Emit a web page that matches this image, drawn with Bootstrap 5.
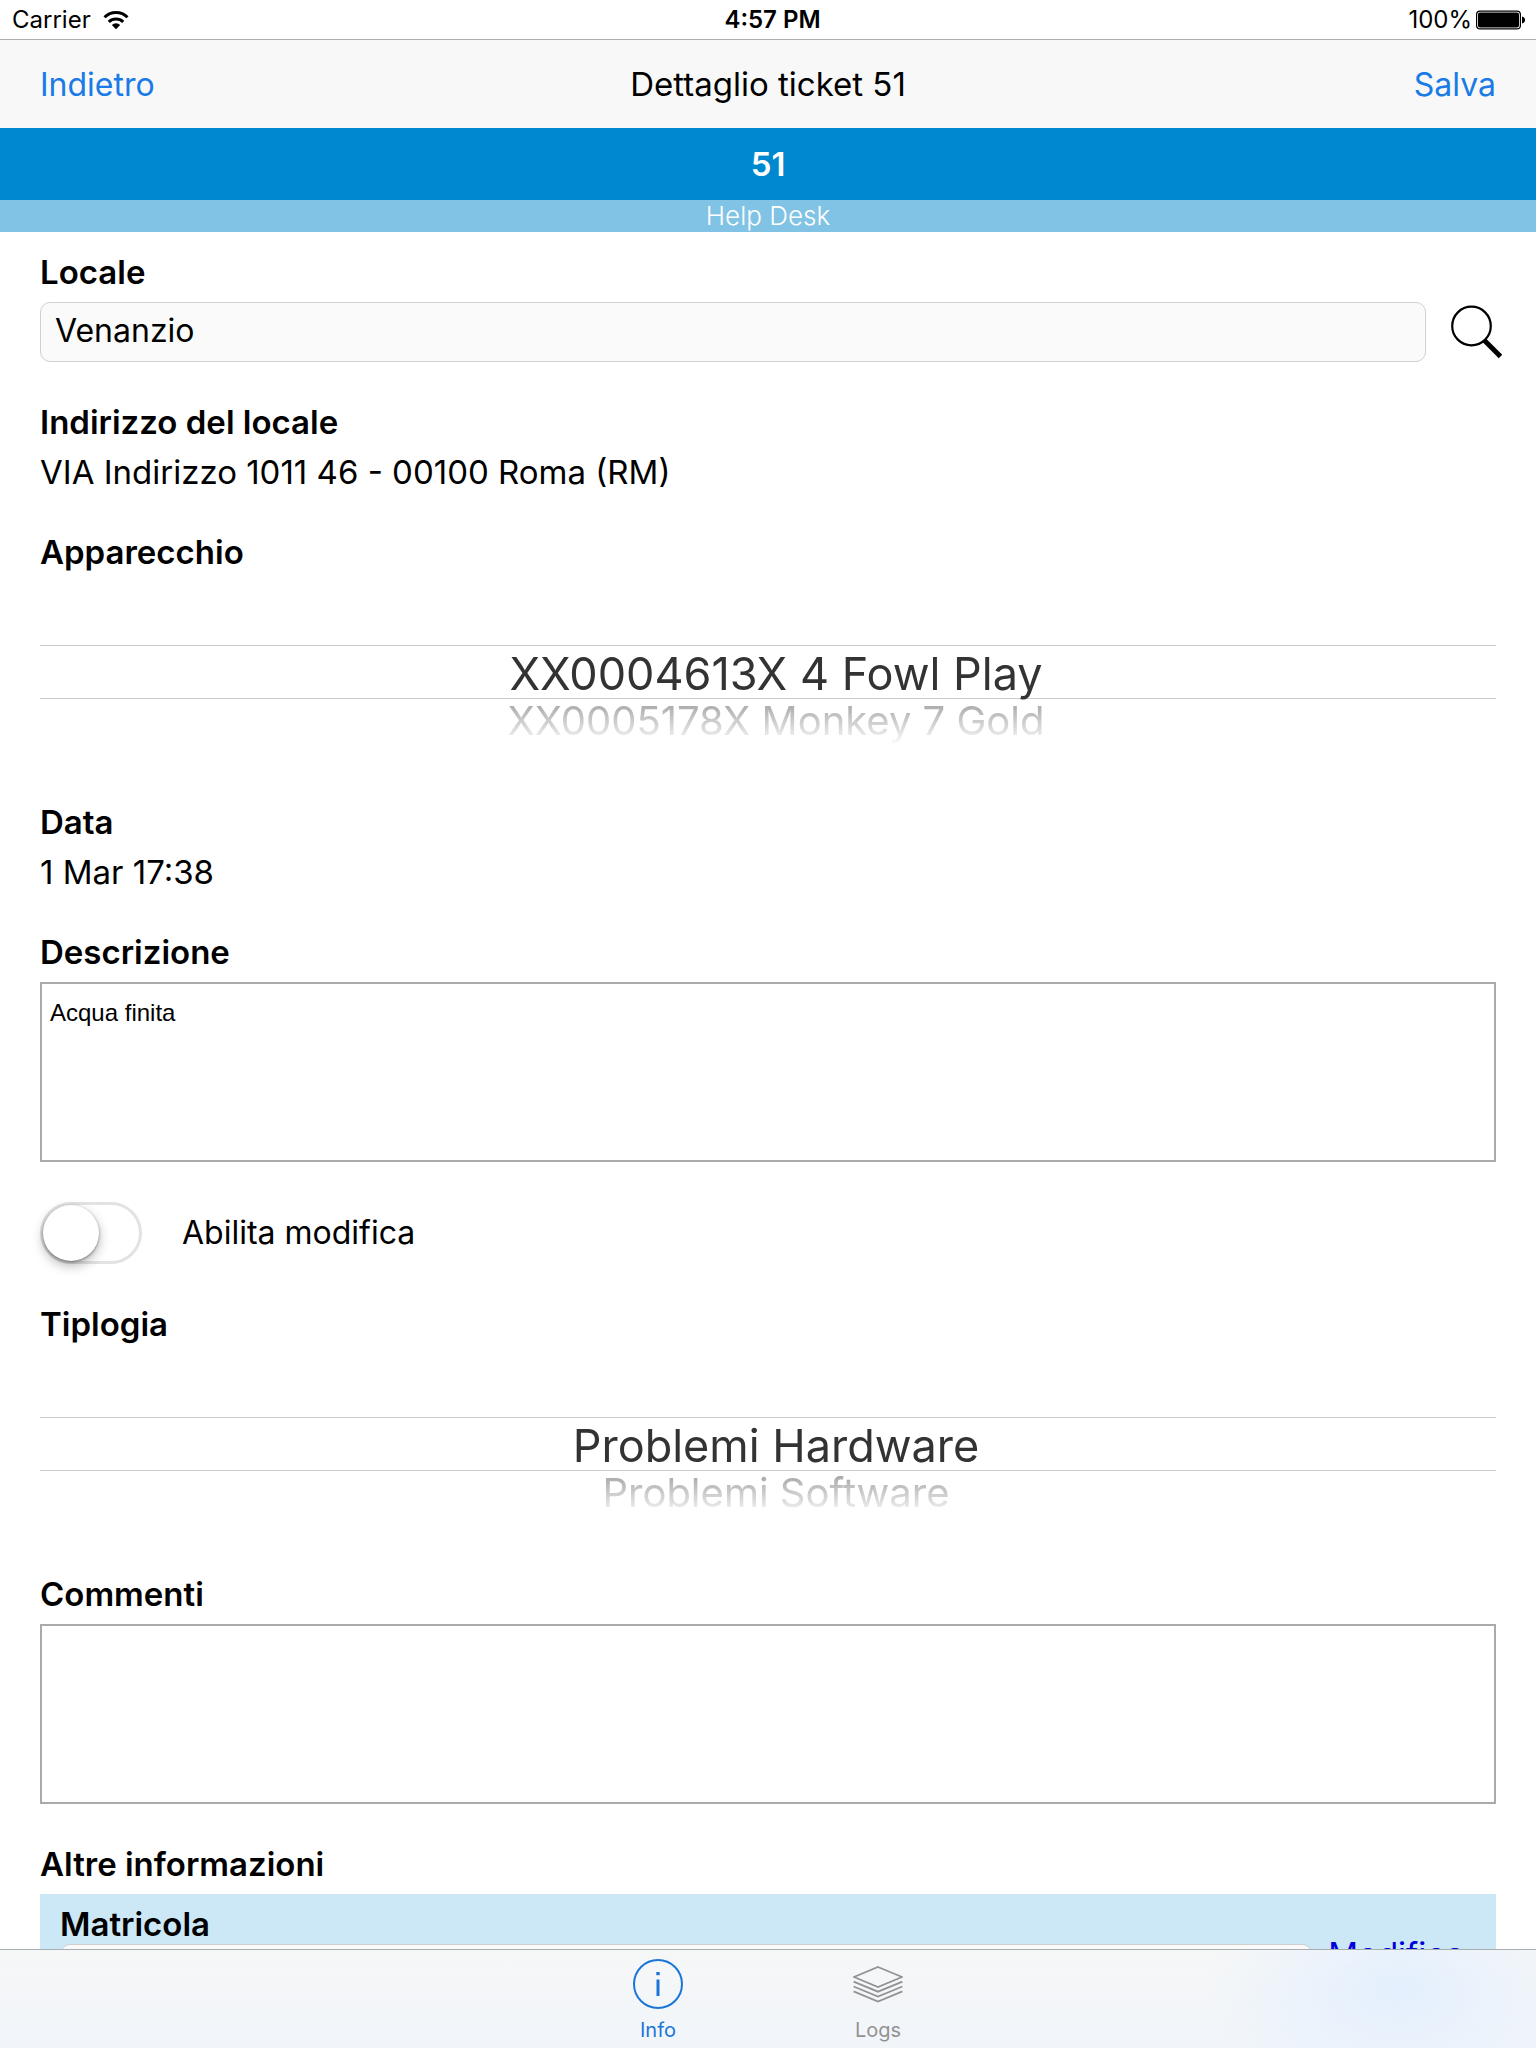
<!DOCTYPE html>
<html lang="it">
<head>
<meta charset="utf-8">
<meta name="viewport" content="width=device-width, initial-scale=1">
<title>Dettaglio ticket 51</title>
<link href="https://cdn.jsdelivr.net/npm/bootstrap@5.3.0/dist/css/bootstrap.min.css" rel="stylesheet">
<style>
  body { font-family: Inter, "Liberation Sans", sans-serif; font-size: 33px; line-height: 40px; color: #000; background: #fff; }
  a { text-decoration: none; }
  .status-bar { height: 39px; padding: 0 11px 0 12px; font-size: 24px; line-height: 40px; }
  .status-bar > * { flex: 1 1 0; }
  .status-time { padding-left: 8px; }
  .title-bar { height: 89px; padding: 0 40px; background: #f8f8f8; border-top: 1px solid #a9b0ad; }
  .title-bar > * { flex: 1 1 0; }
  .title-bar a { color: #1a7ae6; font-size: 32px; }
  .page-title { margin: 0; font-size: inherit; font-weight: 400; line-height: inherit; }
  .ticket-number { background: #0088cf; line-height: 72px; }
  .ticket-group { background: #80c3e4; font-size: 26px; line-height: 32px; font-weight: 300; }
  .form-area { min-height: 0; padding: 20px 40px 0; gap: 40px; }
  .form-area > * { flex-shrink: 0; }
  .field { display: flex; flex-direction: column; gap: 10px; }
  .field-title { font-weight: 600; margin: 0; font-size: inherit; line-height: inherit; }
  .text-field { height: 60px; padding: 0 14px 4px; border: 1px solid #d0d0d0; border-radius: 10px; background: #fafafa; color: #000; font-size: 32px; }
  .search-row { gap: 24px; margin-right: -6px; }
  .note-field { height: 180px; padding: 15px 8px; border: 2px solid #aaa; border-radius: 0; color: #000; font: 24px/28px "Liberation Sans", Arial, sans-serif; resize: none; }
  .picker { height: 180px; padding: 64px 0 0 16px; border: 0; outline: 0; appearance: none; -webkit-appearance: none; overflow: hidden; text-align: center; font: inherit;
    background: linear-gradient(#cbcbcb, #cbcbcb) 0 63px / 100% 1px no-repeat, linear-gradient(#cbcbcb, #cbcbcb) 0 116px / 100% 1px no-repeat;
    -webkit-mask-image: linear-gradient(#000 118px, rgba(0,0,0,.9) 122px, transparent 164px); mask-image: linear-gradient(#000 118px, rgba(0,0,0,.9) 122px, transparent 164px); }
  .picker option { padding: 0; min-height: 0; height: 46px; line-height: 42px; font-size: 40px; color: #a0a0a0; }
  .picker option:checked { height: 50px; line-height: 50px; font-size: 45px; color: #333; background: none; }
  .switch-row { gap: 40px; font-size: 32px; }
  .toggle { width: 102px; height: 62px; margin: 0; border: 3px solid #e3e3e3; border-radius: 31px; background: #fff; appearance: none; -webkit-appearance: none; overflow: visible; }
  .toggle::before { content: ""; display: block; width: 56px; height: 56px; border-radius: 50%; background: #fff; box-shadow: 0 5px 12px rgba(0,0,0,.28), 0 1px 3px rgba(0,0,0,.4); }
  .extra-box { background: #cce7f5; padding: 10px 32px 20px 20px; gap: 16px; }
  .extra-box a { color: #0000dc; }
  .tab-bar { position: relative; z-index: 1; height: 99px; gap: 100px; border-top: 1px solid #a8aeb0;
    background: radial-gradient(ellipse 190px 120px at 91% 40%, rgba(226,239,254,.9), rgba(226,239,254,0)), linear-gradient(#f6f7f7, #f1f5fa); }
  .tab-bar a { width: 120px; padding-top: 9px; font-size: 20px; line-height: 28px; color: #929292; }
  .tab-bar a.active { color: #1a75d8; }
  .tab-bar svg { margin-bottom: 7px; }
</style>
<script src="https://cdn.jsdelivr.net/npm/bootstrap@5.3.0/dist/js/bootstrap.bundle.min.js"></script>
</head>
<body class="d-flex flex-column vh-100 overflow-hidden">
<header class="flex-shrink-0">
  <div class="status-bar d-flex">
    <div class="d-flex align-items-center">
      <span>Carrier</span>
      <svg class="ms-2 ps-1" width="30" height="20" viewBox="0 0 26 20" aria-hidden="true">
        <g fill="none" stroke="#000" stroke-width="3"><path d="M1.500 7.200a16.400 16.400 0 0 1 23 0"/><path d="M5.800 11.800a10.400 10.400 0 0 1 14.400 0"/></g>
        <path d="M8.800 15a6.200 6.200 0 0 1 8.400 0L13 19.300z"/>
      </svg>
    </div>
    <div class="status-time text-center fw-semibold">4:57 PM</div>
    <div class="d-flex align-items-center justify-content-end">
      <span>100%</span>
      <svg class="ms-1" width="49" height="20" viewBox="0 0 49 20" aria-hidden="true">
        <rect x=".6" y="1.100" width="43.800" height="17.800" rx="3.500" fill="#fff" stroke="#000" stroke-width="1.200"/>
        <rect x="2" y="2.500" width="41" height="15" rx="2" fill="#000"/>
        <path d="M46 6.500q3 .6 3 3.500t-3 3.500z"/>
      </svg>
    </div>
  </div>
  <nav class="title-bar d-flex align-items-center">
    <div><a href="#">Indietro</a></div>
    <h1 class="page-title text-center text-nowrap">Dettaglio ticket 51</h1>
    <div class="text-end"><a href="#">Salva</a></div>
  </nav>
  <div class="ticket-number text-center text-white fw-semibold">51</div>
  <div class="ticket-group text-center text-white">Help Desk</div>
</header>

<main class="form-area flex-grow-1 d-flex flex-column overflow-hidden">
  <div class="field">
    <label class="field-title" for="locale">Locale</label>
    <div class="search-row d-flex align-items-center">
      <input class="text-field form-control" id="locale" type="text" value="Venanzio">
      <button class="btn p-0 border-0 lh-1 flex-shrink-0" type="button" aria-label="Cerca">
        <svg class="d-block" width="52" height="54" viewBox="0 0 52 54" aria-hidden="true">
          <circle cx="21.500" cy="21" r="19.300" fill="none" stroke="#000" stroke-width="2.200"/>
          <path d="M34.500 35.500L50.500 51.500" stroke="#000" stroke-width="5"/>
        </svg>
      </button>
    </div>
  </div>
  <div class="field">
    <h2 class="field-title">Indirizzo del locale</h2>
    <div>VIA Indirizzo 1011 46 - 00100 Roma (RM)</div>
  </div>
  <div class="field">
    <label class="field-title" for="apparecchio">Apparecchio</label>
    <select class="picker" id="apparecchio" size="2">
      <option selected>XX0004613X 4 Fowl Play</option>
      <option>XX0005178X Monkey 7 Gold</option>
    </select>
  </div>
  <div class="field">
    <h2 class="field-title">Data</h2>
    <div>1 Mar 17:38</div>
  </div>
  <div class="field">
    <label class="field-title" for="descrizione">Descrizione</label>
    <textarea class="note-field" id="descrizione">Acqua finita</textarea>
  </div>
  <div class="switch-row d-flex align-items-center">
    <input class="toggle" type="checkbox" role="switch" id="abilita">
    <label for="abilita">Abilita modifica</label>
  </div>
  <div class="field">
    <label class="field-title" for="tipologia">Tiplogia</label>
    <select class="picker" id="tipologia" size="2">
      <option selected>Problemi Hardware</option>
      <option>Problemi Software</option>
    </select>
  </div>
  <div class="field">
    <label class="field-title" for="commenti">Commenti</label>
    <textarea class="note-field" id="commenti"></textarea>
  </div>
  <section class="field">
    <h2 class="field-title">Altre informazioni</h2>
    <div class="extra-box d-flex align-items-center">
      <div class="flex-grow-1">
        <label class="field-title d-block" for="matricola">Matricola</label>
        <input class="text-field form-control" id="matricola" type="text">
      </div>
      <a href="#">Modifica</a>
    </div>
  </section>
</main>

<footer class="tab-bar flex-shrink-0 d-flex justify-content-center">
  <a class="active d-flex flex-column align-items-center" href="#" aria-current="page">
    <svg width="50" height="50" viewBox="0 0 50 50" fill="none" stroke="currentColor" aria-hidden="true">
      <circle cx="25" cy="25" r="24" stroke-width="2"/>
      <path d="M25 20.500V37" stroke-width="3"/><path d="M25 13v3.200" stroke-width="3.400"/>
    </svg>
    Info
  </a>
  <a class="d-flex flex-column align-items-center" href="#">
    <svg width="50" height="50" viewBox="0 0 50 50" fill="none" stroke="currentColor" stroke-width="1.800" aria-hidden="true">
      <path d="M25 8L49 18 25 28 1 18zM.6 22.600L25 32.700 49.400 22.600M.6 27.500L25 37.600 49.400 27.500M.6 32.400L25 42.500 49.400 32.400"/>
    </svg>
    Logs
  </a>
</footer>
</body>
</html>
